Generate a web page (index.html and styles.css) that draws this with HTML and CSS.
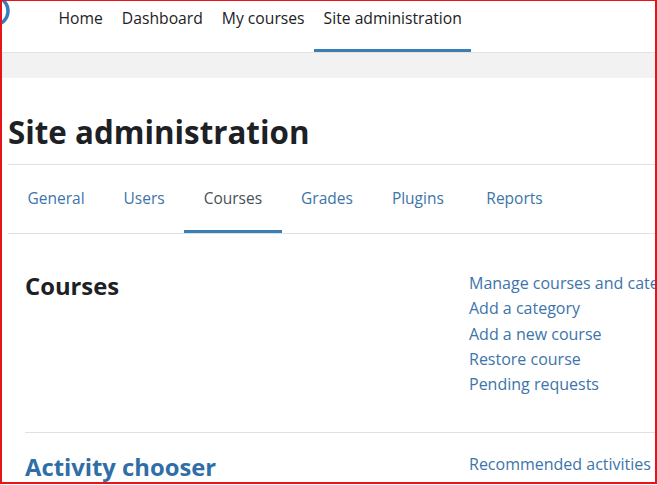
FILE: index.html
```html
<!DOCTYPE html>
<html lang="en">
<head>
<meta charset="utf-8">
<title>Site administration</title>
<link rel="stylesheet" href="styles.css">
</head>
<body>
<div class="frame">
  <header class="navbar">
    <div class="logo">
      <svg width="12" height="30" viewBox="0 0 12 30"><circle cx="-8" cy="10" r="14" fill="none" stroke="#3a7bbd" stroke-width="3.5"/></svg>
    </div>
    <nav class="primary">
      <a class="pitem" href="#">Home</a>
      <a class="pitem" href="#">Dashboard</a>
      <a class="pitem" href="#">My courses</a>
      <a class="pitem active" href="#">Site administration</a>
    </nav>
  </header>
  <div class="band"></div>
  <main class="page">
    <h1 class="title">Site administration</h1>
    <nav class="tabs">
      <a class="tab" href="#">General</a>
      <a class="tab" href="#">Users</a>
      <a class="tab active" href="#">Courses</a>
      <a class="tab" href="#">Grades</a>
      <a class="tab plugins" href="#">Plugins</a>
      <a class="tab" href="#">Reports</a>
    </nav>
    <section class="row">
      <h3 class="rowhead">Courses</h3>
      <ul class="links">
        <li><a href="#">Manage courses and categories</a></li>
        <li><a href="#">Add a category</a></li>
        <li><a href="#">Add a new course</a></li>
        <li><a href="#">Restore course</a></li>
        <li><a href="#">Pending requests</a></li>
      </ul>
    </section>
    <section class="row second">
      <h3 class="rowhead link">Activity chooser</h3>
      <ul class="links">
        <li><a href="#">Recommended activities</a></li>
      </ul>
    </section>
  </main>
</div>
</body>
</html>
```

FILE: styles.css
```css
* { box-sizing: border-box; }
html, body { margin: 0; padding: 0; background: #fff; }
body { font-family: "Open Sans", "Noto Sans", sans-serif; color: #1d2125; }
a { text-decoration: none; }

.frame {
  width: 657px;
  height: 484px;
  border-top: 1px solid #e8141c;
  border-left: 2px solid #e8141c;
  border-right: 2px solid #e8141c;
  border-bottom: 2px solid #e8141c;
  overflow: hidden;
}

.navbar {
  display: flex;
  height: 52px;
  border-bottom: 1px solid #e3e3e3;
}
.logo { width: 47px; }
.logo svg { display: block; }
.primary { display: flex; }
.pitem {
  display: block;
  padding: 5px 9.5px 0;
  height: 51px;
  font-size: 15.7px;
  line-height: 24px;
  color: #1d2125;
  border-bottom: 3px solid transparent;
}
.pitem.active { border-bottom-color: #3b7eb3; }

.band { height: 25px; background: #f2f2f2; }

.page { padding-left: 6px; }
.title {
  margin: 0;
  padding: 36px 0 14px;
  font-size: 31.3px;
  line-height: 36px;
  font-weight: 700;
  border-bottom: 1px solid #dee2e6;
}

.tabs {
  display: flex;
  height: 69px;
  border-bottom: 1px solid #dee2e6;
}
.tab {
  display: flex;
  align-items: center;
  padding: 0 19.5px 0;
  font-size: 15.5px;
  color: #3d74aa;
  border-bottom: 3px solid transparent;
}
.tab.plugins { padding-right: 23px; }
.tab.active { color: #495057; border-bottom-color: #3b7eb3; }

.row {
  display: grid;
  grid-template-columns: 444px 1fr;
  margin-left: 17px;
  padding: 37px 0 35px;
  border-bottom: 1px solid #dee2e6;
}
.row.second { border-bottom: none; padding-top: 19px; }
.rowhead {
  margin: 0;
  font-size: 23.8px;
  line-height: 30px;
  font-weight: 700;
  color: #1d2125;
}
.rowhead.link { color: #2f6ea6; }
.links {
  list-style: none;
  margin: 0;
  padding: 0;
  white-space: nowrap;
  font-size: 16px;
  line-height: 25.3px;
}
.links a { color: #3d74aa; }
```
